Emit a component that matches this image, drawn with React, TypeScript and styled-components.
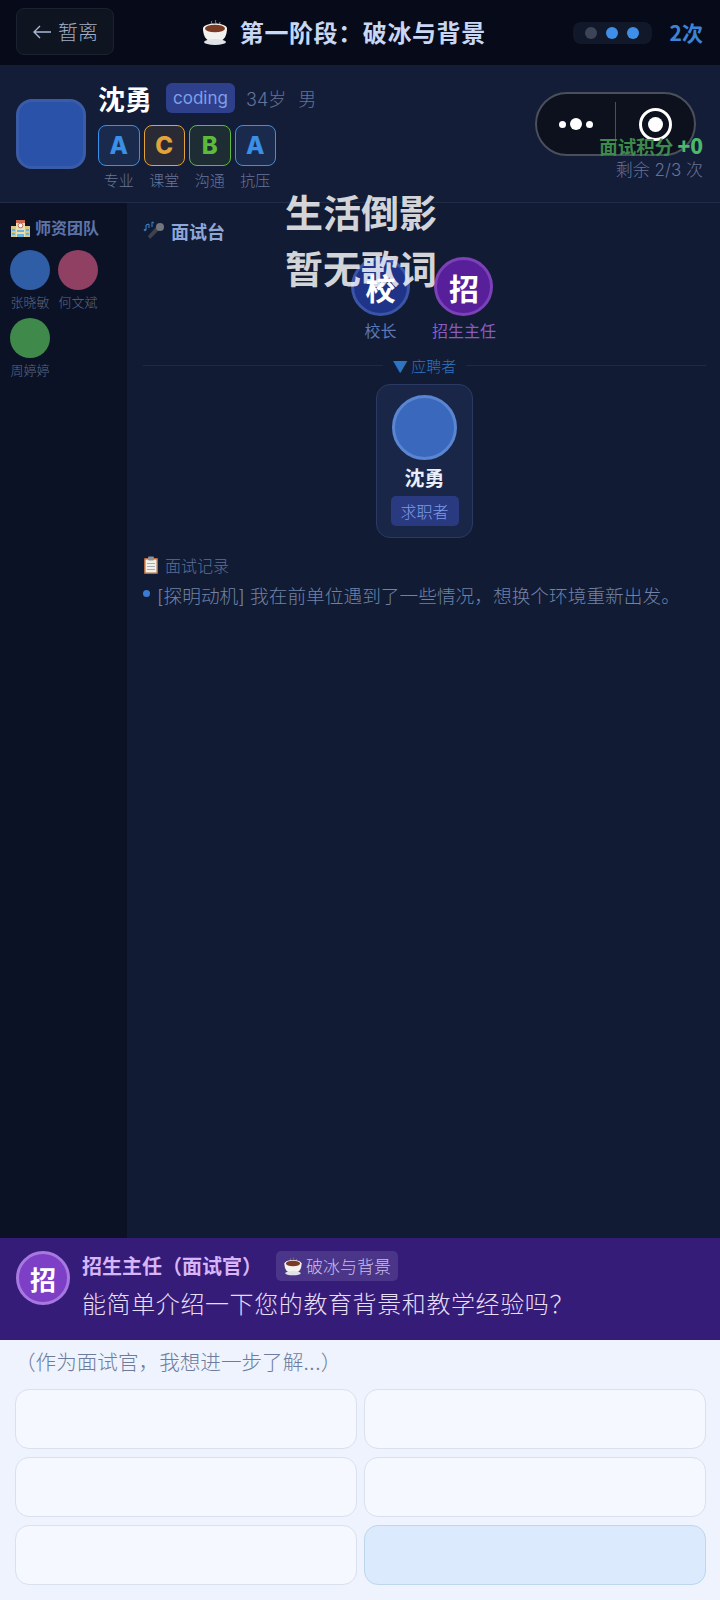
import styled, { createGlobalStyle } from 'styled-components'

const latinFirst = 'Inter, "Noto Sans CJK SC", sans-serif'

const GlobalStyle = createGlobalStyle`
  html, body {
    margin: 0;
    padding: 0;
    background: #111b34;
  }
  * {
    box-sizing: border-box;
  }
  body {
    font-family: "Noto Sans CJK SC", Inter, "Noto Sans", sans-serif;
  }
`

const Page = styled.div`
  position: relative;
  width: 720px;
  height: 1600px;
  display: flex;
  flex-direction: column;
  overflow: hidden;
`

const TopBar = styled.header`
  position: relative;
  height: 65px;
  flex: none;
  display: flex;
  align-items: center;
  padding: 0 17px 2px 16px;
  background: #070b19;
`

const BackButton = styled.div`
  width: 98px;
  height: 47px;
  display: flex;
  align-items: center;
  justify-content: center;
  gap: 6px;
  border: 1px solid #1c2231;
  border-radius: 8px;
  background: #0f1421;
  color: #a0afcb;
  font-size: 20px;
  font-weight: 300;
`

const StageTitle = styled.div`
  flex: 1;
  display: flex;
  align-items: center;
  justify-content: center;
  gap: 11px;
  color: #c8d8f4;
  font-size: 24px;
  font-weight: 700;
  letter-spacing: 0.6px;
  white-space: nowrap;
`

const DotPill = styled.div`
  width: 79px;
  height: 22px;
  display: flex;
  align-items: center;
  justify-content: center;
  gap: 9px;
  margin: 2px 18px 0 0;
  border-radius: 8px;
  background: #101829;
`

const Dot = styled.span<{ $on?: boolean }>`
  width: 12px;
  height: 12px;
  border-radius: 50%;
  background: ${(p) => (p.$on ? '#3f8fe8' : '#3c4558')};
`

const Count = styled.div`
  color: #3d83d6;
  font-size: 21px;
  font-weight: 700;
`

const Profile = styled.section`
  height: 138px;
  flex: none;
  display: flex;
  align-items: flex-start;
  padding: 17px 17px 0 16px;
  border-bottom: 1px solid #212c49;
  background: #131d38;
`

const BigAvatar = styled.div`
  width: 70px;
  height: 70px;
  flex: none;
  margin-top: 17px;
  border: 3px solid #3a5ca8;
  border-radius: 16px;
  background: #2a52a8;
`

const ProfileInfo = styled.div`
  margin-left: 12px;
  flex: 1;
`

const NameRow = styled.div`
  height: 32px;
  display: flex;
  align-items: center;
  color: #63739a;
  font-family: ${latinFirst};
  font-size: 18px;
  font-weight: 300;
`

const ProfileName = styled.span`
  margin: 0 14px 0 0;
  color: #ffffff;
  font-family: "Noto Sans CJK SC", sans-serif;
  font-size: 27px;
  font-weight: 700;
`

const SkillTag = styled.span`
  width: 69px;
  height: 30px;
  display: flex;
  align-items: center;
  justify-content: center;
  margin-right: 11px;
  border-radius: 6px;
  background: #2e3f8c;
  color: #7f9fe8;
  font-size: 17px;
  font-weight: 400;
`

const Gender = styled.span`
  margin-left: 12px;
`

const GradeRow = styled.div`
  display: flex;
  gap: 4px;
  margin-top: 11px;
`

const GradeItem = styled.div`
  width: 41.5px;
  display: flex;
  flex-direction: column;
  align-items: center;
  color: #67769a;
  font-size: 15px;
  font-weight: 300;
  line-height: 20px;
  white-space: nowrap;
`

const GradeBox = styled.div<{ $color: string; $bg: string }>`
  width: 41.5px;
  height: 41px;
  display: flex;
  align-items: center;
  justify-content: center;
  margin-bottom: 4px;
  border: 1.5px solid ${(p) => p.$color};
  border-radius: 8px;
  background: ${(p) => p.$bg};
  color: ${(p) => p.$color};
  font-family: Inter, sans-serif;
  font-size: 24px;
  font-weight: 800;
  line-height: 1;
`

const ScoreBox = styled.div`
  position: relative;
  z-index: 3;
  margin-top: 50px;
  text-align: right;
`

const ScoreLine = styled.div`
  height: 26px;
  color: #3c8a4c;
  font-size: 18.5px;
  font-weight: 700;
  line-height: 26px;
  white-space: nowrap;
  b {
    color: #4cb868;
    font-size: 21px;
  }
`

const RemainLine = styled.div`
  color: #63739a;
  font-family: ${latinFirst};
  font-size: 17px;
  font-weight: 300;
  line-height: 24px;
  white-space: nowrap;
`

const Capsule = styled.div`
  position: absolute;
  z-index: 2;
  top: 92px;
  left: 535px;
  width: 161px;
  height: 64px;
  display: flex;
  align-items: center;
  border: 2px solid #4b4f5c;
  border-radius: 32px;
  background: #0d101d;
`

const CapsuleSide = styled.div`
  flex: 1;
  height: 44px;
  display: flex;
  align-items: center;
  justify-content: center;
  gap: 4px;
  & + & {
    border-left: 1px solid #4b4f5c;
  }
`

const CapsuleDot = styled.span<{ $size: number }>`
  width: ${(p) => p.$size}px;
  height: ${(p) => p.$size}px;
  border-radius: 50%;
  background: #ffffff;
`

const CapsuleRing = styled.span`
  width: 33px;
  height: 33px;
  display: flex;
  align-items: center;
  justify-content: center;
  border: 3px solid #ffffff;
  border-radius: 50%;
  &::after {
    content: '';
    width: 15px;
    height: 15px;
    border-radius: 50%;
    background: #ffffff;
  }
`

const Lyrics = styled.div`
  position: absolute;
  z-index: 4;
  top: 183px;
  left: 285px;
  color: rgba(255, 255, 255, 0.82);
  font-size: 38px;
  font-weight: 700;
  line-height: 56px;
`

const Body = styled.div`
  flex: 1;
  min-height: 0;
  display: flex;
`

const Sidebar = styled.aside`
  width: 127px;
  flex: none;
  padding: 12px 9px 0 10px;
  background: #0b1226;
`

const SideTitle = styled.div`
  height: 24px;
  display: flex;
  align-items: center;
  gap: 4px;
  margin-bottom: 11px;
  color: #5e74a8;
  font-size: 16px;
  font-weight: 700;
  white-space: nowrap;
`

const TeacherGrid = styled.div`
  display: grid;
  grid-template-columns: repeat(2, 40px);
  column-gap: 8px;
  row-gap: 5px;
`

const Teacher = styled.div`
  width: 40px;
  display: flex;
  flex-direction: column;
  align-items: center;
  color: #5a6888;
  font-size: 13px;
  font-weight: 300;
  line-height: 23px;
  white-space: nowrap;
`

const TeacherAvatar = styled.div<{ $color: string }>`
  width: 40px;
  height: 40px;
  border-radius: 50%;
  background: ${(p) => p.$color};
`

const Main = styled.main`
  flex: 1;
  min-width: 0;
  padding: 16px 14px 0 16px;
  background: #111b34;
`

const MainTitle = styled.div`
  height: 24px;
  display: flex;
  align-items: center;
  gap: 6px;
  color: #8ea6d8;
  font-size: 18px;
  font-weight: 700;
`

const Panel = styled.div`
  display: flex;
  justify-content: center;
  gap: 22px;
  margin-top: 14px;
  padding-right: 2px;
`

const Interviewer = styled.div<{ $color: string }>`
  display: flex;
  flex-direction: column;
  align-items: center;
  color: ${(p) => p.$color};
  font-size: 16px;
  font-weight: 400;
  line-height: 26px;
  white-space: nowrap;
`

const InterviewerAvatar = styled.div<{ $bg: string; $ring: string }>`
  width: 59px;
  height: 59px;
  display: flex;
  align-items: center;
  justify-content: center;
  margin-bottom: 1px;
  border: 3px solid ${(p) => p.$ring};
  border-radius: 50%;
  background: ${(p) => p.$bg};
  color: #ffffff;
  font-size: 30px;
  font-weight: 700;
`

const Divider = styled.div`
  height: 24px;
  display: flex;
  align-items: center;
  gap: 10px;
  margin-top: 10px;
  color: #2f74c0;
  font-size: 15px;
  font-weight: 300;
  white-space: nowrap;
  &::before,
  &::after {
    content: '';
    flex: 1;
    height: 1px;
    background: #1d2945;
  }
`

const CandidateCard = styled.div`
  width: 97px;
  height: 154px;
  display: flex;
  flex-direction: column;
  align-items: center;
  margin: 7px auto 0;
  padding-top: 10px;
  border: 1px solid #2a3a62;
  border-radius: 14px;
  background: #1a2647;
`

const CandidateAvatar = styled.div`
  width: 65px;
  height: 65px;
  flex: none;
  border: 3px solid #5a85d0;
  border-radius: 50%;
  background: #3a68bd;
`

const CandidateName = styled.div`
  margin-top: 3px;
  color: #e8eefc;
  font-size: 20px;
  font-weight: 700;
  line-height: 29px;
`

const CandidateRole = styled.div`
  width: 68px;
  height: 30px;
  display: flex;
  align-items: center;
  justify-content: center;
  margin-top: 4px;
  border-radius: 5px;
  background: #2a3a80;
  color: #7d9ae6;
  font-size: 16px;
  font-weight: 300;
`

const RecordTitle = styled.div`
  height: 24px;
  display: flex;
  align-items: center;
  gap: 6px;
  margin-top: 15px;
  color: #5e6f98;
  font-size: 16px;
  font-weight: 300;
`

const RecordItem = styled.div`
  position: relative;
  margin-top: 5px;
  padding-left: 14px;
  color: #6f82a8;
  font-family: ${latinFirst};
  font-size: 18.7px;
  font-weight: 300;
  line-height: 30px;
  white-space: nowrap;
  &::before {
    content: '';
    position: absolute;
    top: 8px;
    left: 0;
    width: 7px;
    height: 7px;
    border-radius: 50%;
    background: #3a7bd5;
  }
`

const Dialog = styled.section`
  height: 102px;
  flex: none;
  display: flex;
  padding: 13px 16px 0;
  background: #341c78;
`

const DialogAvatar = styled.div`
  width: 54px;
  height: 54px;
  flex: none;
  display: flex;
  align-items: center;
  justify-content: center;
  border: 3px solid #a878e0;
  border-radius: 50%;
  background: #7c3fc6;
  color: #ffffff;
  font-size: 26px;
  font-weight: 700;
`

const DialogText = styled.div`
  margin-left: 12px;
`

const DialogHead = styled.div`
  display: flex;
  align-items: center;
  color: #d8b4f8;
  font-size: 20px;
  font-weight: 700;
  line-height: 30px;
`

const PhaseTag = styled.span`
  height: 30px;
  display: flex;
  align-items: center;
  gap: 3px;
  margin-left: 14px;
  padding: 0 7px;
  border-radius: 5px;
  background: #4a3589;
  color: #cbbdea;
  font-size: 17px;
  font-weight: 300;
`

const Question = styled.div`
  margin-top: 4px;
  color: #e6def6;
  font-size: 24px;
  font-weight: 300;
  letter-spacing: 0.6px;
  line-height: 36px;
  white-space: nowrap;
`

const Answers = styled.section`
  height: 260px;
  flex: none;
  padding: 6px 14px 0 15px;
  background: #eef3fd;
`

const Hint = styled.div`
  height: 34px;
  margin-bottom: 9px;
  color: #6d7c9c;
  font-family: ${latinFirst};
  font-size: 20.6px;
  font-weight: 300;
  line-height: 34px;
  white-space: nowrap;
`

const AnswerGrid = styled.div`
  display: grid;
  grid-template-columns: 1fr 1fr;
  gap: 8px 7px;
`

const AnswerCard = styled.div<{ $active?: boolean }>`
  height: 60px;
  border: 1.5px solid ${(p) => (p.$active ? '#bcd6ee' : '#d9e0ee')};
  border-radius: 14px;
  background: ${(p) => (p.$active ? '#dceafe' : '#f5f8ff')};
`

function TeaIcon({ size = 28 }: { size?: number }) {
  return (
    <svg width={size} height={size} viewBox="0 0 28 28" fill="none">
      <path d="M11 3c-2 2 2 3 0 6M15 2c-2 2 2 4 0 7M19 4c-1 2 1 3 0 5" stroke="#9a8a80" strokeWidth="1" />
      <path d="M2 10h24c0 8-3 12-7 13H9c-4-1-7-5-7-13Z" fill="#f4f2ee" />
      <ellipse cx="14" cy="10.5" rx="12" ry="5" fill="#f4f2ee" />
      <ellipse cx="14" cy="10.5" rx="10" ry="3.8" fill="#7a3a24" />
      <ellipse cx="14" cy="24" rx="11" ry="3" fill="#dfe3e8" />
    </svg>
  )
}

function SchoolIcon() {
  return (
    <svg width="21" height="21" viewBox="0 0 21 21">
      <rect x="1" y="9" width="19" height="11" fill="#d9c77e" />
      <rect x="6" y="3" width="9" height="17" fill="#eadfae" />
      <rect x="6" y="3" width="9" height="3" fill="#c96a52" />
      <circle cx="10.5" cy="8.5" r="2.4" fill="#f6f6f2" stroke="#a6534a" strokeWidth="0.8" />
      <path d="M2 12h3v2H2zM2 16h3v2H2zM16 12h3v2h-3zM16 16h3v2h-3zM7 13h7v2H7zM7 17h7v3H7z" fill="#6ab2dc" />
    </svg>
  )
}

function MicIcon() {
  return (
    <svg width="22" height="20" viewBox="0 0 22 20" fill="none">
      <path d="M7 18 17 8l-3-3L5 15Z" fill="#3f434c" />
      <circle cx="17" cy="6" r="4" fill="#71757e" />
      <path d="M1 9c0-1 2-1 2 0s-2 1-2 0Zm2 0V4l3-1v4" stroke="#3a8ad8" strokeWidth="1" />
      <path d="M9 6V1l2 1" stroke="#3a8ad8" strokeWidth="1" />
    </svg>
  )
}

function ClipboardIcon() {
  return (
    <svg width="16" height="18" viewBox="0 0 16 18">
      <rect x="1" y="2" width="14" height="16" rx="1" fill="#b5673e" />
      <rect x="2.5" y="3.5" width="11" height="13" fill="#f1f1ea" />
      <rect x="5" y="0.5" width="6" height="4" rx="1" fill="#8f9196" />
      <path d="M4 7h8v1H4zM4 10h8v1H4zM4 13h8v1H4z" fill="#a9adb4" />
    </svg>
  )
}

const grades = [
  { grade: 'A', label: '专业', color: '#3a8fe6', bg: '#1a2a4c' },
  { grade: 'C', label: '课堂', color: '#e2a33c', bg: '#2a2a34' },
  { grade: 'B', label: '沟通', color: '#5cbb3a', bg: '#1e2c34' },
  { grade: 'A', label: '抗压', color: '#3a8fe6', bg: '#1a2a4c' },
]

const teachers = [
  { name: '张晓敏', color: '#2f5da6' },
  { name: '何文斌', color: '#8f4063' },
  { name: '周婷婷', color: '#3f8a4b' },
]

export default function App() {
  return (
    <Page>
      <GlobalStyle />
      <TopBar>
        <BackButton>
          <svg width="20" height="14" viewBox="0 0 20 14" fill="none" stroke="#a9b8d2" strokeWidth="1.4">
            <path d="M19 7H2M8 1 2 7l6 6" />
          </svg>
          暂离
        </BackButton>
        <StageTitle>
          <TeaIcon />
          第一阶段：破冰与背景
        </StageTitle>
        <DotPill>
          <Dot />
          <Dot $on />
          <Dot $on />
        </DotPill>
        <Count>2次</Count>
      </TopBar>

      <Profile>
        <BigAvatar />
        <ProfileInfo>
          <NameRow>
            <ProfileName>沈勇</ProfileName>
            <SkillTag>coding</SkillTag>
            34岁
            <Gender>男</Gender>
          </NameRow>
          <GradeRow>
            {grades.map((g) => (
              <GradeItem key={g.label}>
                <GradeBox $color={g.color} $bg={g.bg}>
                  {g.grade}
                </GradeBox>
                {g.label}
              </GradeItem>
            ))}
          </GradeRow>
        </ProfileInfo>
        <ScoreBox>
          <ScoreLine>
            面试积分 <b>+0</b>
          </ScoreLine>
          <RemainLine>剩余 2/3 次</RemainLine>
        </ScoreBox>
      </Profile>

      <Capsule>
        <CapsuleSide>
          <CapsuleDot $size={7} />
          <CapsuleDot $size={12} />
          <CapsuleDot $size={7} />
        </CapsuleSide>
        <CapsuleSide>
          <CapsuleRing />
        </CapsuleSide>
      </Capsule>

      <Lyrics>
        生活倒影
        <br />
        暂无歌词
      </Lyrics>

      <Body>
        <Sidebar>
          <SideTitle>
            <SchoolIcon />
            师资团队
          </SideTitle>
          <TeacherGrid>
            {teachers.map((t) => (
              <Teacher key={t.name}>
                <TeacherAvatar $color={t.color} />
                {t.name}
              </Teacher>
            ))}
          </TeacherGrid>
        </Sidebar>
        <Main>
          <MainTitle>
            <MicIcon />
            面试台
          </MainTitle>
          <Panel>
            <Interviewer $color="#5d78b4">
              <InterviewerAvatar $bg="#1f3488" $ring="#3a55a8">
                校
              </InterviewerAvatar>
              校长
            </Interviewer>
            <Interviewer $color="#8a5cc0">
              <InterviewerAvatar $bg="#57209a" $ring="#7c40b8">
                招
              </InterviewerAvatar>
              招生主任
            </Interviewer>
          </Panel>
          <Divider>▼ 应聘者</Divider>
          <CandidateCard>
            <CandidateAvatar />
            <CandidateName>沈勇</CandidateName>
            <CandidateRole>求职者</CandidateRole>
          </CandidateCard>
          <RecordTitle>
            <ClipboardIcon />
            面试记录
          </RecordTitle>
          <RecordItem>[探明动机] 我在前单位遇到了一些情况，想换个环境重新出发。</RecordItem>
        </Main>
      </Body>

      <Dialog>
        <DialogAvatar>招</DialogAvatar>
        <DialogText>
          <DialogHead>
            招生主任（面试官）
            <PhaseTag>
              <TeaIcon size={20} />
              破冰与背景
            </PhaseTag>
          </DialogHead>
          <Question>能简单介绍一下您的教育背景和教学经验吗？</Question>
        </DialogText>
      </Dialog>

      <Answers>
        <Hint>（作为面试官，我想进一步了解...）</Hint>
        <AnswerGrid>
          <AnswerCard />
          <AnswerCard />
          <AnswerCard />
          <AnswerCard />
          <AnswerCard />
          <AnswerCard $active />
        </AnswerGrid>
      </Answers>
    </Page>
  )
}
